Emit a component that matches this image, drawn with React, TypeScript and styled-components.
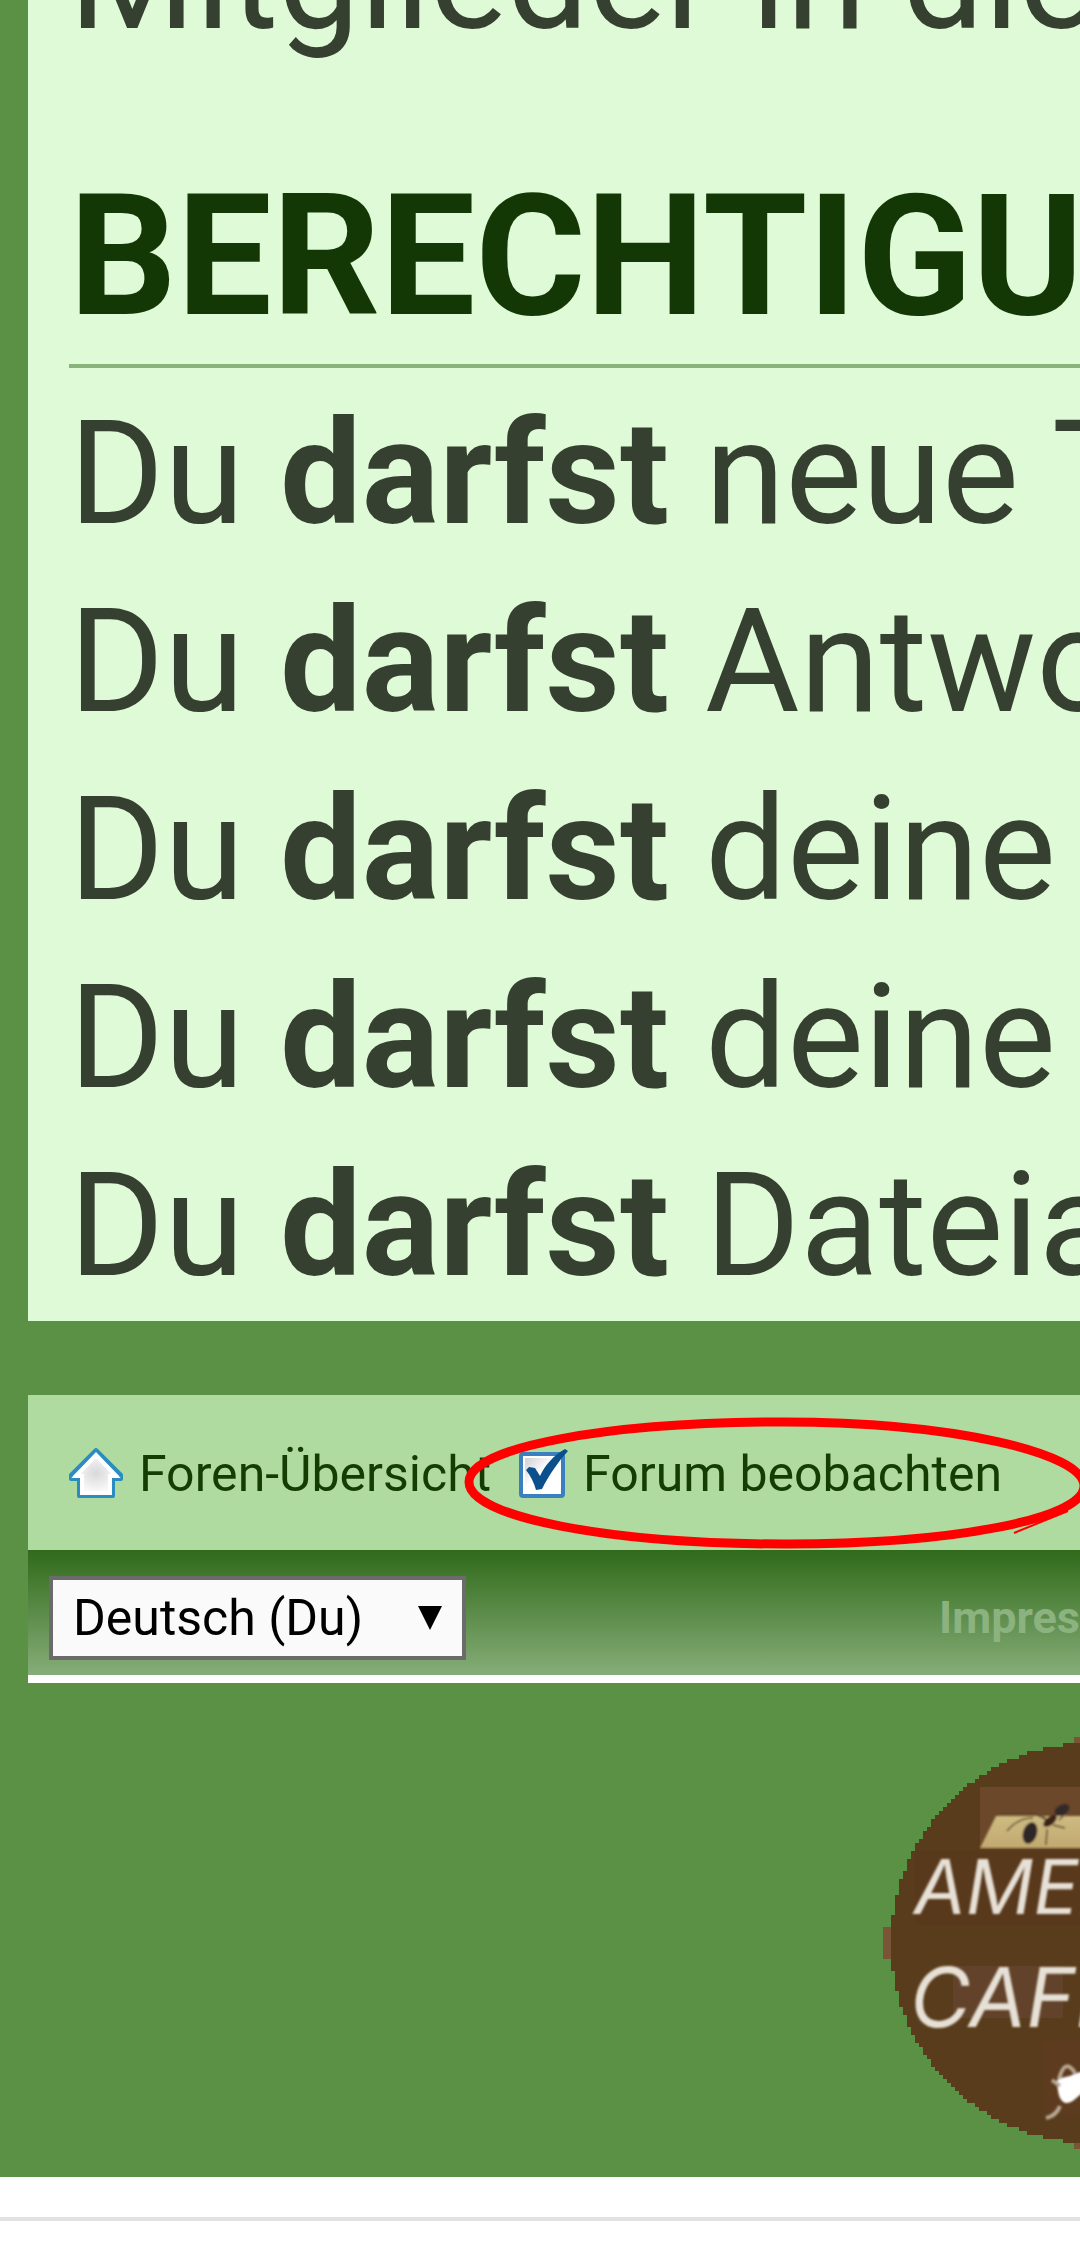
import React from "react";
import styled, { createGlobalStyle } from "styled-components";

const GlobalStyle = createGlobalStyle`
  * { box-sizing: border-box; }
  html { overflow: hidden; }
  body {
    margin: 0;
    background: #ffffff;
    color: #364030;
    font-family: Roboto, "Noto Sans", sans-serif;
  }
`;

const Viewport = styled.div`
  overflow: hidden;
`;

/* The forum page is wider than the screen: the reader has zoomed in. */
const Page = styled.div`
  width: 202%;
  padding: 0 28px 26px;
  background: #5a9144;
`;

const Panel = styled.main`
  margin-top: -116px;
  padding: 0 41px;
  background: #dffad6;
  font-size: 145px;
  line-height: 188px;
  white-space: nowrap;
`;

const Paragraph = styled.p`
  margin: 0;
`;

const Heading = styled.h3`
  margin: 84px 0 11px;
  padding-bottom: 8px;
  border-bottom: 4px solid #8bb27b;
  color: #143805;
  font-size: 169px;
  font-weight: 700;
  line-height: 200px;
`;

const PermissionList = styled.ul`
  margin: 0;
  padding: 0 0 2px;
  list-style: none;
`;

const NavBar = styled.nav`
  display: flex;
  align-items: center;
  gap: 26px;
  height: 155px;
  margin-top: 74px;
  padding: 2px 41px 0;
  background: #b0dba0;
`;

const NavLink = styled.a`
  display: flex;
  align-items: center;
  gap: 16px;
  color: #143c05;
  font-size: 50px;
  line-height: 56px;
  text-decoration: none;
  white-space: nowrap;
`;

const NavIcon = styled.svg<{ $width: number }>`
  flex: none;
  width: ${(props) => props.$width}px;
  height: 54px;
  overflow: visible;
`;

const FooterBar = styled.div`
  display: flex;
  align-items: center;
  gap: 473px;
  height: 133px;
  padding: 10px 21px 0;
  border-bottom: 8px solid #ffffff;
  background: linear-gradient(#306a1a, #86ad78);
`;

const SelectBox = styled.div`
  position: relative;
  flex: none;
`;

const Select = styled.select`
  appearance: none;
  display: block;
  width: 417px;
  height: 84px;
  padding: 0 20px;
  border: 4px solid #6b6b6b;
  border-radius: 0;
  background: #fafafa;
  color: #000000;
  font-family: inherit;
  font-size: 50px;
`;

const SelectArrow = styled.svg`
  position: absolute;
  top: 30px;
  right: 24px;
  width: 24px;
  height: 24px;
  pointer-events: none;
`;

const ImprintLink = styled.a`
  color: #8bb27f;
  font-size: 45px;
  font-weight: 700;
  line-height: 52px;
  text-decoration: none;
`;

const LogoArea = styled.footer`
  display: flex;
  justify-content: center;
  padding-top: 52px;
`;

const LogoImage = styled.svg`
  width: 416px;
  height: 416px;
`;

const BottomRule = styled.hr`
  height: 4px;
  margin: 40px 0 0;
  border: 0;
  background: #e2e2e2;
`;

const MarkedBar = styled.div`
  position: relative;
`;

const Marker = styled.svg`
  position: absolute;
  top: 0;
  left: 0;
  width: 1100px;
  height: 160px;
  pointer-events: none;
`;

const permissions = [
  "neue Themen",
  "Antworten",
  "deine Beiträge",
  "deine Beiträge",
  "Dateianhänge",
];

function HomeIcon() {
  return (
    <NavIcon $width={54} viewBox="0 0 54 54" aria-hidden="true">
      <defs>
        <radialGradient id="house" cx="50%" cy="50%" r="50%">
          <stop offset="0" stopColor="#d8d8d8" />
          <stop offset="0.8" stopColor="#f8f8f8" />
        </radialGradient>
      </defs>
      <path
        d="M27 3 L52 28 V32 H44 V49 H10 V32 H2 V28 Z"
        fill="url(#house)"
        stroke="#2b8cc0"
        strokeWidth="4"
        strokeLinejoin="round"
      />
      <path
        d="M27 8 L47 29 H41 V46 H13 V29 H7 Z"
        fill="none"
        stroke="#ffffff"
        strokeWidth="4"
      />
    </NavIcon>
  );
}

function WatchIcon() {
  return (
    <NavIcon $width={50} viewBox="0 0 50 54" aria-hidden="true">
      <defs>
        <linearGradient id="tickbox" x1="0" y1="0" x2="1" y2="1">
          <stop offset="0" stopColor="#cfcfd4" />
          <stop offset="0.45" stopColor="#ffffff" />
        </linearGradient>
      </defs>
      <rect
        x="4"
        y="7"
        width="42"
        height="42"
        rx="2"
        fill="#ffffff"
        stroke="#3c7fc0"
        strokeWidth="4"
      />
      <rect x="8" y="11" width="34" height="34" fill="url(#tickbox)" />
      <path
        d="M9 23 L12 20 L18 21 L23 29 C28 18 37 8 48 2 L51 4 C41 15 32 28 25 42 L19 43 C17 36 14 29 9 23 Z"
        fill="#0b4f8c"
      />
    </NavIcon>
  );
}

/* Disc edge in 4px steps, like a small bitmap shown enlarged. */
function steppedDisc(center: number, radius: number, step: number) {
  const left: string[] = [];
  const right: string[] = [];
  for (let y = -radius; y < radius; y += step) {
    const mid = y + step / 2;
    const half =
      Math.round(Math.sqrt(radius * radius - mid * mid) / step) * step;
    left.push(`${center - half},${center + y} ${center - half},${center + y + step}`);
    right.unshift(
      `${center + half},${center + y + step} ${center + half},${center + y}`
    );
  }
  return [...left, ...right].join(" ");
}

function CafeLogo() {
  return (
    <LogoImage viewBox="0 0 416 416" role="img" aria-label="Ameisencafe">
      <defs>
        <filter id="soft" x="-10%" y="-10%" width="120%" height="120%">
          <feGaussianBlur stdDeviation="1" />
        </filter>
        <linearGradient id="plank" x1="0" y1="0" x2="0" y2="1">
          <stop offset="0" stopColor="#cdbb82" />
          <stop offset="1" stopColor="#c2a970" />
        </linearGradient>
      </defs>
      <rect x="0" y="192" width="12" height="32" fill="#7a5437" />
      <rect x="191" y="2" width="34" height="412" fill="#7a5437" />
      <polygon points={steppedDisc(208, 200, 4)} fill="#583c1b" />
      <rect x="32" y="116" width="352" height="74" fill="#59391c" />
      <rect x="97" y="52" width="222" height="62" fill="#6c482b" />
      <rect x="70" y="231" width="110" height="52" fill="#62422a" />
      <rect x="160" y="304" width="96" height="76" fill="#5d3b1e" />
      <g filter="url(#soft)">
        <path d="M113 81 H318 V113 H97 Z" fill="url(#plank)" />
        <path
          d="M115 79 L150 78 L166 86 M124 96 Q136 82 150 83 M163 110 L164 94 M170 90 L182 93 M164 87 L160 80 M176 85 L181 80"
          fill="none"
          stroke="#5a4526"
          strokeWidth="1.5"
        />
        <ellipse cx="147" cy="98" rx="7" ry="11" fill="#2e2728" transform="rotate(18 147 98)" />
        <ellipse cx="167" cy="86" rx="8" ry="4" fill="#3d2018" transform="rotate(-38 167 86)" />
        <ellipse cx="179" cy="75" rx="8" ry="5" fill="#33292a" transform="rotate(-30 179 75)" />
        <path
          d="M173 347 C177 341 183 343 189 340 C197 336 214 332 232 342 C240 352 222 356 204 356 C196 358 191 369 182 368 C174 364 176 354 173 347 Z"
          fill="#ffffff"
        />
        <path
          d="M176 344 Q182 322 192 338 M163 383 Q173 381 177 371 M169 345 L177 351"
          fill="none"
          stroke="#b8a893"
          strokeWidth="4"
        />
        <g
          fill="#e6e0d6"
          fontFamily="Inter, Roboto, sans-serif"
          fontStyle="italic"
          fontWeight="400"
        >
          <text x="31" y="179" fontSize="75">
            AMEISEN
          </text>
          <text x="27" y="292" fontSize="83">
            CAFE
          </text>
        </g>
      </g>
    </LogoImage>
  );
}

export default function App() {
  return (
    <Viewport>
      <GlobalStyle />
      <Page>
        <Panel>
          <Paragraph>Mitglieder in diesem</Paragraph>
          <Heading>BERECHTIGUNGEN</Heading>
          <PermissionList>
            {permissions.map((item, index) => (
              <li key={index}>
                Du <strong>darfst</strong> {item}
              </li>
            ))}
          </PermissionList>
        </Panel>
        <MarkedBar>
          <NavBar>
            <NavLink href="#index">
              <HomeIcon />
              Foren-Übersicht
            </NavLink>
            <NavLink href="#watch">
              <WatchIcon />
              Forum beobachten
            </NavLink>
          </NavBar>
          <Marker viewBox="0 0 1100 160" aria-hidden="true">
            <path
              d="M441 87 C441 52 580 27 755 27 C925 27 1056 58 1056 91 C1056 124 925 149 758 149 C580 149 441 122 441 87 Z"
              fill="none"
              stroke="#ff0000"
              strokeWidth="9"
            />
            <path d="M986 138 L1040 116" stroke="#ff0000" strokeWidth="2" />
          </Marker>
        </MarkedBar>
        <FooterBar>
          <SelectBox>
            <Select aria-label="Sprache" defaultValue="du">
              <option value="du">Deutsch (Du)</option>
            </Select>
            <SelectArrow viewBox="0 0 24 24" aria-hidden="true">
              <path d="M0 0 H24 L12 24 Z" fill="#000000" />
            </SelectArrow>
          </SelectBox>
          <ImprintLink href="#impressum">Impressum</ImprintLink>
        </FooterBar>
        <LogoArea>
          <CafeLogo />
        </LogoArea>
      </Page>
      <BottomRule />
    </Viewport>
  );
}
